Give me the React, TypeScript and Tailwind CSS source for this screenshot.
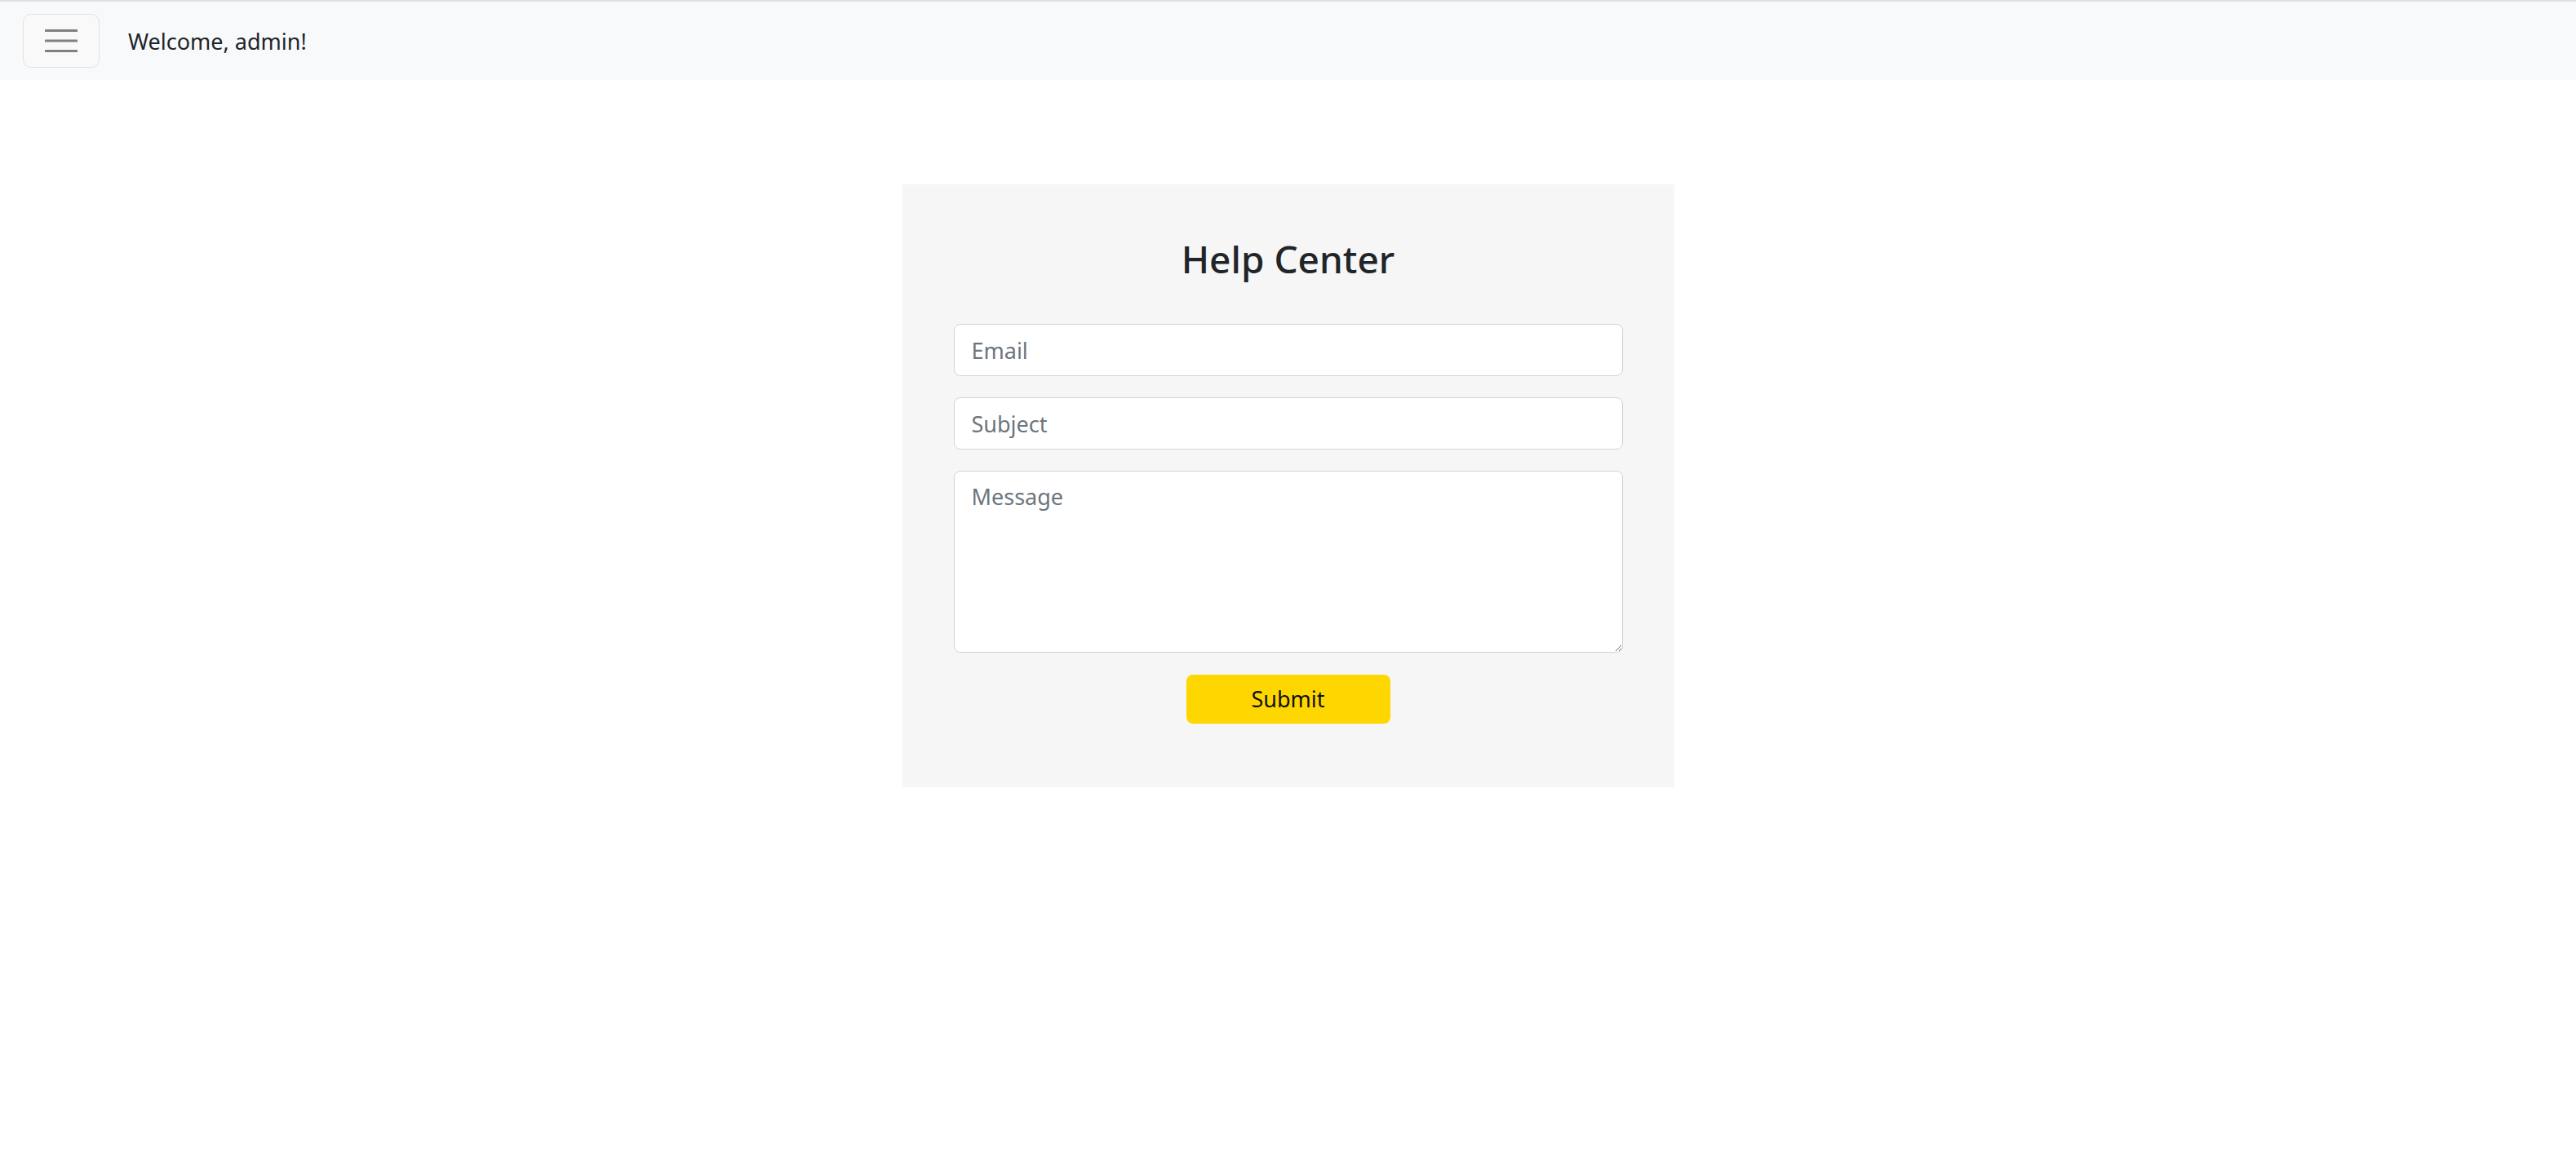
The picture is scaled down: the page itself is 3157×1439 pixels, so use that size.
import { useState } from "react";

const font = { fontFamily: '"Segoe UI", "Noto Sans", sans-serif' };

function Hamburger() {
  return (
    <svg width="40" height="30" viewBox="0 0 40 30" fill="none">
      <path d="M1 2.5h38M1 15h38M1 27.5h38" stroke="#808080" strokeWidth="3" strokeLinecap="round" />
    </svg>
  );
}

export default function App() {
  const [email, setEmail] = useState("");
  const [subject, setSubject] = useState("");
  const [message, setMessage] = useState("");

  return (
    <div className="min-h-screen bg-white text-[#212529]" style={font}>
      {/* Top bar */}
      <header className="flex items-center h-[98px] border-t-2 border-[#dcdfe3] bg-[#f8f9fa] pl-[28px]">
        <button
          type="button"
          className="flex items-center justify-center w-[94px] h-[66px] rounded-[10px] border-[1.5px] border-[#e2e2e2] bg-[#f9f9fa]"
        >
          <Hamburger />
        </button>
        <span className="ml-[35px] text-[27px] leading-none text-[#212529]">Welcome, admin!</span>
      </header>

      {/* Help form */}
      <main className="flex justify-center pt-[128px]">
        <div className="w-[946px] bg-[#f6f6f6] px-[63px] pt-[64px] pb-[78px]">
          <h2 className="text-center text-[46px] font-medium leading-[1.2] text-[#212529] mb-[52px]">
            Help Center
          </h2>
          <form className="flex flex-col gap-[26px]" onSubmit={(e) => e.preventDefault()}>
            <input
              type="email"
              placeholder="Email"
              value={email}
              onChange={(e) => setEmail(e.target.value)}
              className="h-[64px] w-full rounded-[8px] border-[1.5px] border-[#d0d4d9] bg-white px-[21px] text-[27px] text-[#212529] placeholder:text-[#6c757d] outline-none"
              style={font}
            />
            <input
              type="text"
              placeholder="Subject"
              value={subject}
              onChange={(e) => setSubject(e.target.value)}
              className="h-[64px] w-full rounded-[8px] border-[1.5px] border-[#d0d4d9] bg-white px-[21px] text-[27px] text-[#212529] placeholder:text-[#6c757d] outline-none"
              style={font}
            />
            <textarea
              placeholder="Message"
              value={message}
              onChange={(e) => setMessage(e.target.value)}
              className="block h-[223px] w-full rounded-[8px] border-[1.5px] border-[#d0d4d9] bg-white px-[21px] py-[11px] text-[27px] leading-[1.5] text-[#212529] placeholder:text-[#6c757d] outline-none"
              style={font}
            />
            <div className="flex justify-center pt-[1px]">
              <button
                type="submit"
                className="w-[250px] h-[60px] rounded-[8px] bg-[#ffd700] text-[27px] text-[#111]"
                style={font}
              >
                Submit
              </button>
            </div>
          </form>
        </div>
      </main>
    </div>
  );
}
